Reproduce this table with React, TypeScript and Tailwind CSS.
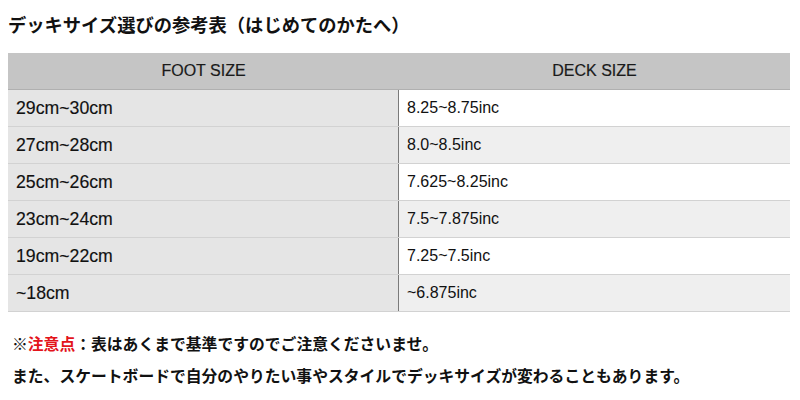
import React from "react";

const rows = [
  ["29cm~30cm", "8.25~8.75inc"],
  ["27cm~28cm", "8.0~8.5inc"],
  ["25cm~26cm", "7.625~8.25inc"],
  ["23cm~24cm", "7.5~7.875inc"],
  ["19cm~22cm", "7.25~7.5inc"],
  ["~18cm", "~6.875inc"],
];

const jp = { fontFamily: '"Noto Sans CJK JP", "Noto Sans", sans-serif' };
const latin = { fontFamily: '"Liberation Sans", Arial, sans-serif' };

export default function App() {
  return (
    <div className="w-[800px] h-[400px] bg-white overflow-hidden text-[#111]" style={jp}>
      <div className="h-[53px] pl-[8px] pt-[10px]">
        <h1 className="text-[18.3px] font-bold leading-[28px]">
          デッキサイズ選びの参考表（はじめてのかたへ）
        </h1>
      </div>
      <div className="ml-[8px] w-[782px]" style={latin}>
        <div className="grid grid-cols-[391px_391px] h-[37px] bg-[#c5c5c5] border-b border-[#b0b0b0] text-[16px] text-[#1a1a1a]">
          <div className="flex items-center justify-center" style={{ WebkitTextStroke: "0.2px #1a1a1a" }}>
            FOOT SIZE
          </div>
          <div className="flex items-center justify-center" style={{ WebkitTextStroke: "0.2px #1a1a1a" }}>
            DECK SIZE
          </div>
        </div>
        {rows.map((r, i) => (
          <div
            key={i}
            className="grid grid-cols-[391px_391px] h-[37px] border-b border-[#d2d2d2]"
          >
            <div
              className="flex items-center pl-[8px] bg-[#e5e5e5] border-r border-[#7a7a7a] text-[17.7px]"
              style={{ WebkitTextStroke: "0.15px #111" }}
            >
              {r[0]}
            </div>
            <div
              className={
                "flex items-center pl-[8px] text-[16px] " +
                (i % 2 === 0 ? "bg-white" : "bg-[#efefef]")
              }
            >
              {r[1]}
            </div>
          </div>
        ))}
      </div>
      <div className="pl-[12px] pt-[16px] text-[15.8px] font-bold leading-[32px]">
        <p>
          ※<span className="text-[#e3141b]">注意点</span>：表はあくまで基準ですのでご注意くださいませ。
        </p>
        <p>また、スケートボードで自分のやりたい事やスタイルでデッキサイズが変わることもあります。</p>
      </div>
    </div>
  );
}
